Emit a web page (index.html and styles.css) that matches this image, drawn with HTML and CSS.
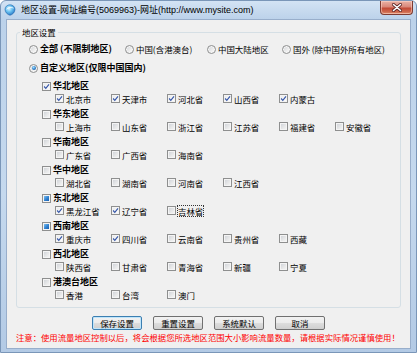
FILE: index.html
```html
<!DOCTYPE html>
<html lang="zh-CN">
<head>
<meta charset="utf-8">
<title>地区设置</title>
<link rel="stylesheet" href="styles.css">
</head>
<body>
<div class="window">
  <div class="titlebar">
    <svg class="app-icon" viewBox="0 0 12 12" width="12" height="12">
      <defs>
        <radialGradient id="ig" cx="0.4" cy="0.35" r="0.7">
          <stop offset="0" stop-color="#e6f7ff"/>
          <stop offset="0.45" stop-color="#6cc3f2"/>
          <stop offset="1" stop-color="#1f6fc0"/>
        </radialGradient>
      </defs>
      <path d="M6 0.8 C8.8 0.8 11 2.8 11 5.4 C11 8.4 8.4 10.6 6 11.3 C3.6 10.6 1 8.4 1 5.4 C1 2.8 3.2 0.8 6 0.8 Z" fill="url(#ig)" stroke="#2a6db0" stroke-width="0.6"/>
      <path d="M2.6 5.2 C4 3.2 7.6 2.8 9.6 4.2" stroke="#ffffff" stroke-width="0.9" fill="none" opacity="0.85"/>
    </svg>
    <span class="title">地区设置-网址编号(5069963)-网址(http://www.mysite.com)</span>
    <span class="close">
      <svg viewBox="0 0 12 9" width="12" height="9">
        <path d="M2.5 1.5 L9.5 7.5 M9.5 1.5 L2.5 7.5" stroke="#5b2424" stroke-width="3" stroke-linecap="round"/>
        <path d="M2.5 1.5 L9.5 7.5 M9.5 1.5 L2.5 7.5" stroke="#ffffff" stroke-width="1.6" stroke-linecap="round"/>
      </svg>
    </span>
  </div>
  <div class="client">
    <fieldset class="group">
      <legend class="group-title">地区设置</legend>
      <div class="radio-row">
        <label class="opt strong"><span class="rb"></span>全部 (不限制地区)</label>
        <label class="opt"><span class="rb"></span>中国(含港澳台)</label>
        <label class="opt"><span class="rb"></span>中国大陆地区</label>
        <label class="opt"><span class="rb"></span>国外 (除中国外所有地区)</label>
      </div>
      <div class="radio-row custom">
        <label class="opt strong"><span class="rb on"></span>自定义地区(仅限中国国内)</label>
      </div>

      <div class="region">
        <div class="region-head"><span class="cb on"><svg viewBox="0 0 7 7"><path d="M1.1 3.5 L2.8 5.3 L6 1.3"/></svg></span>华北地区</div>
        <div class="region-items">
          <span class="item"><span class="cb on"><svg viewBox="0 0 7 7"><path d="M1.1 3.5 L2.8 5.3 L6 1.3"/></svg></span>北京市</span>
          <span class="item"><span class="cb on"><svg viewBox="0 0 7 7"><path d="M1.1 3.5 L2.8 5.3 L6 1.3"/></svg></span>天津市</span>
          <span class="item"><span class="cb on"><svg viewBox="0 0 7 7"><path d="M1.1 3.5 L2.8 5.3 L6 1.3"/></svg></span>河北省</span>
          <span class="item"><span class="cb on"><svg viewBox="0 0 7 7"><path d="M1.1 3.5 L2.8 5.3 L6 1.3"/></svg></span>山西省</span>
          <span class="item"><span class="cb on"><svg viewBox="0 0 7 7"><path d="M1.1 3.5 L2.8 5.3 L6 1.3"/></svg></span>内蒙古</span>
        </div>
      </div>

      <div class="region">
        <div class="region-head"><span class="cb"></span>华东地区</div>
        <div class="region-items">
          <span class="item"><span class="cb"></span>上海市</span>
          <span class="item"><span class="cb"></span>山东省</span>
          <span class="item"><span class="cb"></span>浙江省</span>
          <span class="item"><span class="cb"></span>江苏省</span>
          <span class="item"><span class="cb"></span>福建省</span>
          <span class="item"><span class="cb"></span>安徽省</span>
        </div>
      </div>

      <div class="region">
        <div class="region-head"><span class="cb"></span>华南地区</div>
        <div class="region-items">
          <span class="item"><span class="cb"></span>广东省</span>
          <span class="item"><span class="cb"></span>广西省</span>
          <span class="item"><span class="cb"></span>海南省</span>
        </div>
      </div>

      <div class="region">
        <div class="region-head"><span class="cb"></span>华中地区</div>
        <div class="region-items">
          <span class="item"><span class="cb"></span>湖北省</span>
          <span class="item"><span class="cb"></span>湖南省</span>
          <span class="item"><span class="cb"></span>河南省</span>
          <span class="item"><span class="cb"></span>江西省</span>
        </div>
      </div>

      <div class="region">
        <div class="region-head"><span class="cb mixed"></span>东北地区</div>
        <div class="region-items">
          <span class="item"><span class="cb on"><svg viewBox="0 0 7 7"><path d="M1.1 3.5 L2.8 5.3 L6 1.3"/></svg></span>黑龙江省</span>
          <span class="item"><span class="cb on"><svg viewBox="0 0 7 7"><path d="M1.1 3.5 L2.8 5.3 L6 1.3"/></svg></span>辽宁省</span>
          <span class="item"><span class="cb"></span><span class="focus">吉林省</span></span>
        </div>
      </div>

      <div class="region">
        <div class="region-head"><span class="cb mixed"></span>西南地区</div>
        <div class="region-items">
          <span class="item"><span class="cb on"><svg viewBox="0 0 7 7"><path d="M1.1 3.5 L2.8 5.3 L6 1.3"/></svg></span>重庆市</span>
          <span class="item"><span class="cb on"><svg viewBox="0 0 7 7"><path d="M1.1 3.5 L2.8 5.3 L6 1.3"/></svg></span>四川省</span>
          <span class="item"><span class="cb"></span>云南省</span>
          <span class="item"><span class="cb"></span>贵州省</span>
          <span class="item"><span class="cb"></span>西藏</span>
        </div>
      </div>

      <div class="region">
        <div class="region-head"><span class="cb"></span>西北地区</div>
        <div class="region-items">
          <span class="item"><span class="cb"></span>陕西省</span>
          <span class="item"><span class="cb"></span>甘肃省</span>
          <span class="item"><span class="cb"></span>青海省</span>
          <span class="item"><span class="cb"></span>新疆</span>
          <span class="item"><span class="cb"></span>宁夏</span>
        </div>
      </div>

      <div class="region">
        <div class="region-head"><span class="cb"></span>港澳台地区</div>
        <div class="region-items">
          <span class="item"><span class="cb"></span>香港</span>
          <span class="item"><span class="cb"></span>台湾</span>
          <span class="item"><span class="cb"></span>澳门</span>
        </div>
      </div>
    </fieldset>

    <div class="buttons">
      <button class="btn default" type="button">保存设置</button>
      <button class="btn" type="button">重置设置</button>
      <button class="btn" type="button">系统默认</button>
      <button class="btn" type="button">取消</button>
    </div>
    <p class="note">注意：使用流量地区控制以后，将会根据您所选地区范围大小影响流量数量，请根据实际情况谨慎使用！</p>
  </div>
</div>
</body>
</html>
```

FILE: styles.css
```css
* {
  box-sizing: border-box;
}

html,
body {
  margin: 0;
  padding: 0;
}

body {
  width: 417px;
  height: 353px;
  overflow: hidden;
  background: #ffffff;
  font-family: "Noto Sans CJK SC", sans-serif;
  font-size: 8.45px;
  color: #000000;
}

.window {
  width: 417px;
  height: 353px;
  display: flex;
  flex-direction: column;
  border: 1px solid #7a96b8;
  border-radius: 6px 6px 0 0;
  background: linear-gradient(to bottom, #d3e3f4 0, #bcd2ea 18px, #c5d9ee 55%, #b3cae5 100%);
}

.titlebar {
  height: 18px;
  flex: none;
  display: flex;
  align-items: flex-start;
  padding: 0 3px 0 3px;
}

.app-icon {
  flex: none;
  display: block;
  margin-top: 3px;
}

.title {
  margin-left: 5px;
  margin-top: 3px;
  font-family: "Liberation Sans", "Noto Sans CJK SC", sans-serif;
  font-size: 9px;
  line-height: 12px;
  white-space: nowrap;
  color: #000000;
}

.close {
  margin-left: auto;
  width: 33px;
  height: 14px;
  flex: none;
  display: flex;
  align-items: center;
  justify-content: center;
  border: 1px solid #7d3b32;
  border-top: none;
  border-radius: 0 0 4px 4px;
  background: linear-gradient(to bottom, #eab2a5 0%, #d9887a 45%, #c24a36 55%, #cf6a4f 85%, #e39a7a 100%);
  box-shadow: inset 0 0 0 1px rgba(255, 220, 210, 0.5);
}

.close svg {
  display: block;
}

.client {
  flex: 1;
  margin: 0 5px 3px;
  border: 1px solid #98aecb;
  background: #f0f0f0;
  display: flex;
  flex-direction: column;
}

.group {
  margin: 6px 9px 0;
  padding: 5px 8px 3px 12px;
  border: 1px solid #d5dfe5;
  border-radius: 3px;
  min-width: 0;
}

.group-title {
  margin-left: -9px;
  padding: 0 2px;
  line-height: 12px;
  font-size: 8.45px;
}

.radio-row {
  display: grid;
  grid-template-columns: 96px 82px 75px auto;
  height: 12px;
  line-height: 12px;
}

.radio-row.custom {
  margin-top: 7px;
  display: flex;
}

.opt {
  display: flex;
  align-items: center;
  white-space: nowrap;
}

.strong {
  font-weight: bold;
  font-size: 9px;
}

.rb {
  flex: none;
  width: 9px;
  height: 9px;
  margin-right: 2px;
  border: 1px solid #8e8f8f;
  border-radius: 50%;
  background: linear-gradient(135deg, #cfd3d8 0%, #eeeeee 60%, #ffffff 100%);
  box-shadow: inset 0 0 0 1px #f6f6f6;
}

.rb.on {
  padding: 1.5px;
}

.rb.on::before {
  content: "";
  display: block;
  width: 4px;
  height: 4px;
  border-radius: 50%;
  background: radial-gradient(circle at 40% 35%, #a6e2fb 0%, #3a8ed8 45%, #123e78 100%);
}

.region {
  margin-bottom: 3px;
}

.radio-row.custom + .region {
  margin-top: 6px;
}

.region-head {
  height: 12px;
  margin-left: 13px;
  display: flex;
  align-items: center;
  font-weight: bold;
  font-size: 9px;
  line-height: 12px;
  white-space: nowrap;
}

.region-items {
  height: 13px;
  margin-left: 26px;
  display: grid;
  grid-template-columns: repeat(6, 56px);
  align-items: center;
  line-height: 12px;
}

.item {
  display: flex;
  align-items: center;
  white-space: nowrap;
}

.cb {
  flex: none;
  display: block;
  width: 9px;
  height: 9px;
  margin-right: 2px;
  border: 1px solid #8e8f8f;
  background: linear-gradient(135deg, #cbcfd5 0%, #e6e7e8 55%, #f8f8f8 100%);
  box-shadow: inset 0 0 0 1px #f4f4f4;
}

.cb.on {
  background: linear-gradient(135deg, #e6e8eb 0%, #f6f6f6 60%, #ffffff 100%);
}

.cb svg {
  display: block;
  width: 7px;
  height: 7px;
}

.cb svg path {
  fill: none;
  stroke: #3556a8;
  stroke-width: 1.15;
}

.cb.mixed::before {
  content: "";
  display: block;
  margin: 1px;
  height: 5px;
  background: linear-gradient(135deg, #7fc0f0 0%, #2f80d0 55%, #1a5fae 100%);
}

.focus {
  outline: 1px dotted #333333;
  outline-offset: 0;
  line-height: 10px;
}

.buttons {
  display: flex;
  justify-content: center;
  gap: 11px;
  margin-top: 8px;
}

.btn {
  width: 50px;
  height: 14px;
  padding: 0;
  border: 1px solid #707070;
  border-radius: 2px;
  background: linear-gradient(to bottom, #f2f2f2 0%, #ebebeb 50%, #dddddd 51%, #cfcfcf 100%);
  font-family: "Noto Sans CJK SC", sans-serif;
  font-size: 8.45px;
  line-height: 12px;
  color: #000000;
  text-align: center;
}

.btn.default {
  border-color: #3c7fb1;
  box-shadow: inset 0 0 0 1px #bfe5fb;
}

.note {
  margin: 1px 0 0 9px;
  color: #ff0000;
  line-height: 12px;
  font-size: 8.35px;
  white-space: nowrap;
}
```
